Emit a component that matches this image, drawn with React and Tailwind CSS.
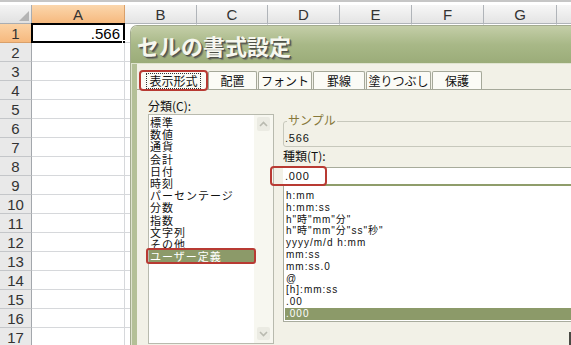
import React from 'react';

const jp = "font-['Noto_Sans_CJK_JP',sans-serif]";
const latin = "font-['Liberation_Sans','Noto_Sans_CJK_JP',sans-serif]";

const cols = [
  { name: 'A', w: 'w-[93px]' },
  { name: 'B', w: 'w-[72px]' },
  { name: 'C', w: 'w-[71px]' },
  { name: 'D', w: 'w-[72px]' },
  { name: 'E', w: 'w-[72px]' },
  { name: 'F', w: 'w-[72px]' },
  { name: 'G', w: 'w-[73px]' },
  { name: '', w: 'w-[72px]' },
];

const rows = Array.from({ length: 17 }, (_, i) => i + 1);

const tabs = [
  { label: '表示形式', w: 'w-[67px]', active: true },
  { label: '配置', w: 'w-[49px]' },
  { label: 'フォント', w: 'w-[54px]' },
  { label: '罫線', w: 'w-[52px]' },
  { label: '塗りつぶし', w: 'w-[65px]' },
  { label: '保護', w: 'w-[50px]' },
];

const categories = [
  '標準', '数値', '通貨', '会計', '日付', '時刻', 'パーセンテージ',
  '分数', '指数', '文字列', 'その他', 'ユーザー定義',
];

const formats = [
  'h:mm', 'h:mm:ss', 'h"時"mm"分"', 'h"時"mm"分"ss"秒"', 'yyyy/m/d h:mm',
  'mm:ss', 'mm:ss.0', '@', '[h]:mm:ss', '.00', '.000',
];

function Chevron({ up }) {
  return (
    <svg width="9" height="6" viewBox="0 0 9 6" fill="none">
      <path
        d={up ? 'M1 5 L4.5 1.5 L8 5' : 'M1 1 L4.5 4.5 L8 1'}
        stroke="#b9bab0"
        strokeWidth="1.6"
      />
    </svg>
  );
}

function Sheet() {
  return (
    <div className={`flex flex-col ${latin}`}>
      <div className="h-[5px] border-t-2 border-[#c6c6c6] bg-white" />

      {/* Column headers */}
      <div className="flex h-[19px]">
        <div className="relative w-[32px] shrink-0 border-r border-b border-[#a9adb2] bg-linear-to-b from-[#f4f4f4] to-[#e1e1e1]">
          <svg className="absolute right-[2px] bottom-[2px]" width="10" height="10" viewBox="0 0 10 10">
            <path d="M10 0 L10 10 L0 10 Z" fill="#b4b4b4" />
          </svg>
        </div>
        {cols.map((c, i) => (
          <div
            key={i}
            className={`${c.w} shrink-0 flex items-center justify-center border-r border-b text-[15px] leading-none text-[#333] ${
              c.name === 'A'
                ? 'border-[#d9a06a] bg-linear-to-b from-[#fbd7ad] to-[#f6b97e]'
                : 'border-[#b0b4b9] bg-linear-to-b from-[#f7f7f7] to-[#e4e4e4]'
            }`}
          >
            {c.name}
          </div>
        ))}
      </div>

      {/* Rows */}
      {rows.map((r) => (
        <div key={r} className="flex h-[19px]">
          <div
            className={`w-[32px] shrink-0 flex items-center justify-center border-r border-b text-[15px] leading-none text-[#333] ${
              r === 1
                ? 'border-[#d9a06a] bg-linear-to-b from-[#fbd2a4] to-[#f6b97e]'
                : 'border-[#c4c6c9] border-r-[#a3a7ac] bg-[#e9e9e9]'
            }`}
          >
            {r}
          </div>
          {cols.map((c, i) => (
            <div key={i} className={`relative ${c.w} shrink-0 border-r border-b border-[#d6d8db] bg-white`}>
              {r === 1 && c.name === 'A' && (
                <>
                  <div className="flex h-full items-center justify-end pr-[4px] text-[15px] leading-none text-black">
                    .566
                  </div>
                  <div className="absolute -top-px -left-px -right-px -bottom-px border-2 border-black" />
                  <div className="absolute -right-[4px] -bottom-[4px] h-[6px] w-[6px] border border-white bg-black" />
                </>
              )}
            </div>
          ))}
        </div>
      ))}
    </div>
  );
}

function Dialog() {
  return (
    <div className="absolute left-[130px] top-[25px] flex h-[330px] w-[450px] flex-col overflow-hidden rounded-tl-[7px] border-l border-t border-[#a3ab8f]">
      {/* Title bar */}
      <div className="flex h-[38px] shrink-0 items-center border-b border-[#e0e4d0] bg-linear-to-b from-[#c4cea8] via-[#a8b887] to-[#9bac79] pl-[6px]">
        <span
          className={`${jp} text-[22px] font-bold leading-none text-[#f6f7ef] [text-shadow:1px_1px_0_#4e5046,2px_2px_1px_#6b6d62]`}
        >
          セルの書式設定
        </span>
      </div>

      <div className="flex flex-1 bg-[#f2f1e7]">
        {/* Left frame */}
        <div className="w-[6px] shrink-0 border-l border-[#dfe3cf] bg-[#b4c097]" />

        <div className="flex flex-1 flex-col">
          {/* Tabs */}
          <div className="mt-[7px] flex h-[19px] gap-[1px] border-b border-[#a5a899] pl-[3px]">
            {tabs.map((t) => (
              <div
                key={t.label}
                className={`relative ${t.w} shrink-0 flex items-center justify-center rounded-t-[2px] border border-b-0 border-[#a5a899] bg-[#fbfbf6] ${jp} text-[12px] leading-none text-[#111]`}
              >
                {t.active ? (
                  <>
                    <span className="border border-dotted border-[#333] px-[2px] py-[1px]">{t.label}</span>
                    <span className="absolute -left-[2px] -right-[2px] -top-[2px] -bottom-[2px] rounded-[4px] border-2 border-[#b83a33]" />
                  </>
                ) : (
                  t.label
                )}
              </div>
            ))}
          </div>

          {/* Content */}
          <div className="flex pl-[11px] pt-[9px]">
            {/* Category column */}
            <div className="flex w-[126px] shrink-0 flex-col">
              <div className={`${jp} h-[13px] text-[12px] leading-[13px] text-[#111]`}>分類(C):</div>
              <div className="mt-[2px] flex h-[230px] border border-[#b8baae] bg-white">
                <div className="flex flex-1 flex-col pt-[1px]">
                  {categories.map((c) => (
                    <div
                      key={c}
                      className={`relative ${jp} h-[12.2px] pl-[1px] text-[11px] leading-[12.2px] tracking-[1px] ${
                        c === 'ユーザー定義' ? 'bg-[#8c9a69] text-white' : 'text-[#111]'
                      }`}
                    >
                      {c}
                      {c === 'ユーザー定義' && (
                        <span className="absolute -left-[3px] -right-[2px] -top-[2px] -bottom-[2px] rounded-[3px] border-2 border-[#b83a33]" />
                      )}
                    </div>
                  ))}
                </div>
                <div className="flex w-[19px] shrink-0 flex-col items-center justify-between bg-[#f7f7f0] pt-[2px] pb-[3px]">
                  <div className="flex h-[14px] w-[13px] items-center justify-center rounded-[2px] bg-[#ebebe3]">
                    <Chevron up />
                  </div>
                  <div className="flex h-[13px] w-[13px] items-center justify-center rounded-[2px] bg-[#ebebe3]">
                    <Chevron />
                  </div>
                </div>
              </div>
            </div>

            {/* Right column */}
            <div className="ml-[9px] flex w-[300px] shrink-0 flex-col pt-[22px]">
              {/* Sample group */}
              <div className="relative h-[26px] rounded-[3px] border border-[#c7c8bc]">
                <span className={`absolute -top-[9px] left-[3px] bg-[#f2f1e7] px-[1px] ${jp} text-[12px] leading-[14px] text-[#86783a]`}>
                  サンプル
                </span>
                <div className={`${latin} pl-[1px] pt-[10px] text-[11px] leading-[12px] tracking-[0.8px] text-[#111]`}>.566</div>
              </div>

              <div className={`${jp} h-[17px] text-[12px] leading-[17px] text-[#111]`}>種類(T):</div>

              {/* Type input */}
              <div className="relative mt-[3px] h-[19px] border-t border-b-2 border-t-[#a7ab9b] border-b-[#8f9d6b] bg-white">
                <div className={`${latin} pl-[2px] text-[11px] leading-[16px] tracking-[0.8px] text-[#111]`}>.000</div>
                <span className="absolute -left-[13px] -top-[2px] h-[20px] w-[57px] rounded-[4px] border-2 border-[#b83a33]" />
              </div>

              {/* Format list */}
              <div className="flex h-[136px] flex-col border-b border-l border-[#a9ac9e] bg-white pt-[4px]">
                {formats.map((f) => (
                  <div
                    key={f}
                    className={`${latin} ml-[1px] h-[11.8px] pl-[1px] text-[10px] leading-[11.8px] tracking-[1px] ${
                      f === '.000' ? 'bg-[#8c9a69] text-white' : 'text-[#111]'
                    }`}
                  >
                    {f}
                  </div>
                ))}
              </div>

              <div className="ml-[286px] mt-[10px] h-[14px] w-[2px] bg-[#4a4a44]" />
            </div>
          </div>
        </div>
      </div>
    </div>
  );
}

export default function App() {
  return (
    <div className="relative h-[345px] w-[571px] overflow-hidden bg-white">
      <Sheet />
      <Dialog />
    </div>
  );
}
